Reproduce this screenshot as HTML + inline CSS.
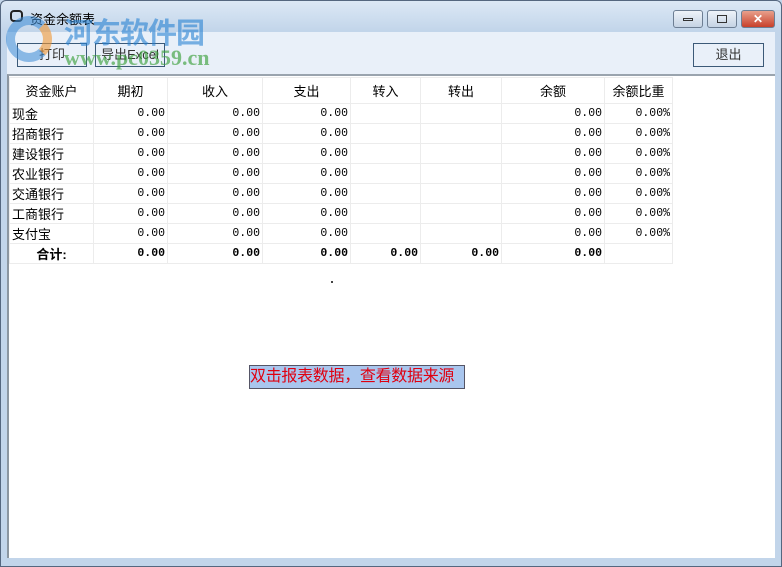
<!DOCTYPE html>
<html><head><meta charset="utf-8"><style>
*{margin:0;padding:0;box-sizing:border-box}
body{width:782px;height:567px;overflow:hidden;background:#c4d6ea;font-family:"Liberation Sans","Noto Sans CJK SC",sans-serif;font-size:12px;position:relative}
.frame{position:absolute;left:0;top:0;width:782px;height:567px;border:1px solid #55677f;border-radius:6px 6px 0 0;background:linear-gradient(#dce8f5,#c2d5ea 30px,#c2d5ea)}
.title{position:absolute;left:30px;top:9px;font-size:13px;color:#000}
.ico{position:absolute;left:10px;top:10px;width:13px;height:12px;border:2px solid #222;border-radius:4px}
.tb{position:absolute;left:7px;top:32px;width:768px;height:42px;background:#e9f0f9}
.btn{position:absolute;height:24px;border:1px solid #3c5a78;background:#e9f0f9;text-align:center;line-height:22px;font-size:13px;color:#333}
.panel{position:absolute;left:7px;top:74px;width:768px;height:484px;background:#fff;border-top:2px solid #9aa4ae;border-left:2px solid #8c96a0}
table{position:absolute;left:9px;top:77px;border-collapse:collapse;font-size:12px}
td{border:1px solid #ececec;height:20px;padding:0 2px;text-align:right;font-family:"Liberation Mono","Noto Sans CJK SC",monospace;font-size:11.5px}
tr.h td{height:26px;text-align:center;font-family:"Liberation Sans","Noto Sans CJK SC",sans-serif;font-size:13px}
td.n{text-align:left;font-family:"Liberation Sans","Noto Sans CJK SC",sans-serif;font-size:13px}
tr.t td{font-weight:bold}
.msg{position:absolute;left:249px;top:365px;width:216px;height:24px;background:#a9c6ee;border:1px solid #556;color:#e00010;font-size:16px;line-height:21px;white-space:nowrap;letter-spacing:-0.3px}
.wb{position:absolute;top:10px;height:18px;border:1px solid #6d7e93;border-radius:3px;background:linear-gradient(#eef3f9,#c5d3e4)}
.wm{position:absolute;left:64px;top:10px;font-size:29px;font-weight:bold;color:rgba(40,130,210,.6);letter-spacing:-1px}
.wu{position:absolute;left:64px;top:45px;font-size:22px;font-weight:bold;color:rgba(60,160,60,.65);font-family:"Liberation Serif",serif}
.logo{position:absolute;left:6px;top:16px;width:46px;height:46px;border-radius:50%;border:9px solid rgba(60,140,215,.55);border-right-color:rgba(240,150,50,.6)}
</style></head><body>
<div class="frame"></div>
<div class="ico"></div>
<div class="title">资金余额表</div>
<div class="wb" style="left:673px;width:30px"><div style="position:absolute;left:9px;top:7px;width:10px;height:3px;border:1px solid #333"></div></div>
<div class="wb" style="left:707px;width:30px"><div style="position:absolute;left:9px;top:4px;width:10px;height:8px;border:1px solid #333"></div></div>
<div class="wb" style="left:741px;width:34px;background:linear-gradient(#e8a08c,#c8402a);color:#fff;text-align:center;font-weight:bold;line-height:16px">✕</div>
<div class="tb"></div>
<div class="btn" style="left:17px;top:43px;width:70px">打印</div>
<div class="btn" style="left:95px;top:43px;width:70px">导出Excel</div>
<div class="btn" style="left:693px;top:43px;width:71px">退出</div>
<div class="panel"></div>
<table>
<colgroup><col style="width:84px"><col style="width:74px"><col style="width:95px"><col style="width:88px"><col style="width:70px"><col style="width:81px"><col style="width:103px"><col style="width:68px"></colgroup>
<tr class="h"><td>资金账户</td><td>期初</td><td>收入</td><td>支出</td><td>转入</td><td>转出</td><td>余额</td><td>余额比重</td></tr>
<tr><td class="n">现金</td><td>0.00</td><td>0.00</td><td>0.00</td><td></td><td></td><td>0.00</td><td>0.00%</td></tr>
<tr><td class="n">招商银行</td><td>0.00</td><td>0.00</td><td>0.00</td><td></td><td></td><td>0.00</td><td>0.00%</td></tr>
<tr><td class="n">建设银行</td><td>0.00</td><td>0.00</td><td>0.00</td><td></td><td></td><td>0.00</td><td>0.00%</td></tr>
<tr><td class="n">农业银行</td><td>0.00</td><td>0.00</td><td>0.00</td><td></td><td></td><td>0.00</td><td>0.00%</td></tr>
<tr><td class="n">交通银行</td><td>0.00</td><td>0.00</td><td>0.00</td><td></td><td></td><td>0.00</td><td>0.00%</td></tr>
<tr><td class="n">工商银行</td><td>0.00</td><td>0.00</td><td>0.00</td><td></td><td></td><td>0.00</td><td>0.00%</td></tr>
<tr><td class="n">支付宝</td><td>0.00</td><td>0.00</td><td>0.00</td><td></td><td></td><td>0.00</td><td>0.00%</td></tr>
<tr class="t"><td class="n" style="text-align:center">合计:</td><td>0.00</td><td>0.00</td><td>0.00</td><td>0.00</td><td>0.00</td><td>0.00</td><td></td></tr>
</table>
<div style="position:absolute;left:331px;top:281px;width:2px;height:2px;background:#444"></div>
<div class="msg">双击报表数据，查看数据来源</div>
<div class="logo"></div>
<div class="wm">河东软件园</div>
<div class="wu">www.pc0359.cn</div>
</body></html>
